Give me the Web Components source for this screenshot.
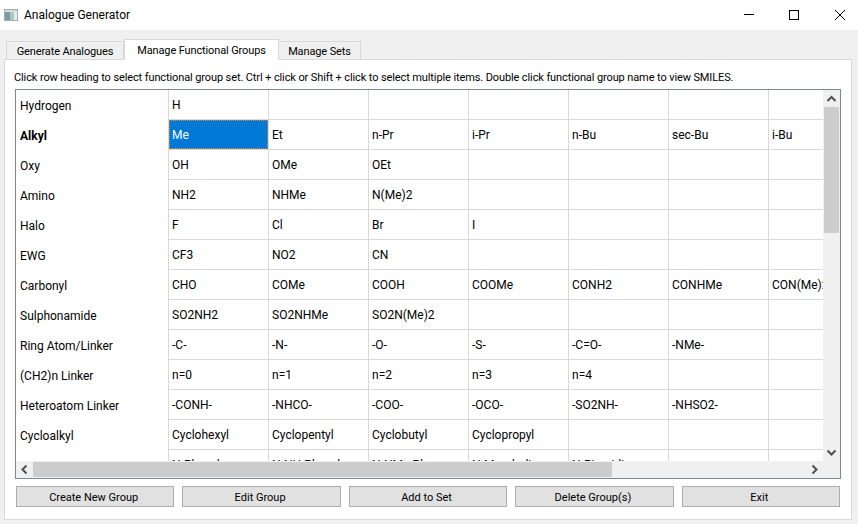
<!DOCTYPE html>
<html lang="en">
<head>
<meta charset="utf-8">
<title>Analogue Generator</title>
<style>
  html, body { margin: 0; height: 100%; background: #f0f0f0; }
  body { font: 12px Roboto, "Noto Sans", sans-serif; color: #000; overflow: hidden; }
</style>
</head>
<body>

<app-window>
  <title-bar slot="title" caption="Analogue Generator"></title-bar>

  <tab-strip slot="tabs">
    <tab-item style="width:118px">Generate Analogues</tab-item>
    <tab-item style="width:155px" selected>Manage Functional Groups</tab-item>
    <tab-item style="width:82px">Manage Sets</tab-item>
  </tab-strip>

  <tab-pane slot="pane">
    <span slot="hint">Click row heading to select functional group set. Ctrl + click or Shift + click to select multiple items. Double click functional group name to view SMILES.</span>

    <group-table slot="table">
      <group-row label="Hydrogen" items="H||||||"></group-row>
      <group-row label="Alkyl" strong selected="0" items="Me|Et|n-Pr|i-Pr|n-Bu|sec-Bu|i-Bu"></group-row>
      <group-row label="Oxy" items="OH|OMe|OEt||||"></group-row>
      <group-row label="Amino" items="NH2|NHMe|N(Me)2||||"></group-row>
      <group-row label="Halo" items="F|Cl|Br|I|||"></group-row>
      <group-row label="EWG" items="CF3|NO2|CN||||"></group-row>
      <group-row label="Carbonyl" items="CHO|COMe|COOH|COOMe|CONH2|CONHMe|CON(Me)2"></group-row>
      <group-row label="Sulphonamide" items="SO2NH2|SO2NHMe|SO2N(Me)2||||"></group-row>
      <group-row label="Ring Atom/Linker" items="-C-|-N-|-O-|-S-|-C=O-|-NMe-|"></group-row>
      <group-row label="(CH2)n Linker" items="n=0|n=1|n=2|n=3|n=4||"></group-row>
      <group-row label="Heteroatom Linker" items="-CONH-|-NHCO-|-COO-|-OCO-|-SO2NH-|-NHSO2-|"></group-row>
      <group-row label="Cycloalkyl" items="Cyclohexyl|Cyclopentyl|Cyclobutyl|Cyclopropyl|||"></group-row>
      <group-row label="" items="N-Phenyl|N-NH-Phenyl|N-NMe-Ph|N-Morpholine|N-Piperidine||"></group-row>
    </group-table>

    <action-button slot="actions">Create New Group</action-button>
    <action-button slot="actions">Edit Group</action-button>
    <action-button slot="actions">Add to Set</action-button>
    <action-button slot="actions">Delete Group(s)</action-button>
    <action-button slot="actions">Exit</action-button>
  </tab-pane>
</app-window>

<script>
// ── Janela: barra de título, separadores e painel ──────────────────────────
class AppWindow extends HTMLElement {
  constructor() {
    super();
    this.attachShadow({ mode: 'open' });
    this.shadowRoot.innerHTML = `
      <style>
        :host { display: flex; flex-direction: column; height: 524px; background: #f0f0f0; }
        .body { display: flex; flex-direction: column; padding: 9px 6px 0 4px; }
      </style>
      <slot name="title"></slot>
      <div class="body">
        <slot name="tabs"></slot>
        <slot name="pane"></slot>
      </div>
    `;
  }
}

class TitleBar extends HTMLElement {
  constructor() {
    super();
    this.attachShadow({ mode: 'open' });
  }

  connectedCallback() {
    this.shadowRoot.innerHTML = `
      <style>
        :host { display: flex; align-items: center; height: 30px; background: #fff; padding: 0 13px 0 4px; }
        .logo { flex: none; margin-right: 6px; margin-top: -1px; }
        .caption { flex: 1; padding-bottom: 1px; }
        svg.ctl { flex: none; display: block; }
        .min { margin-right: 35px; }
        .max { margin-right: 36px; }
      </style>
      <svg class="logo" width="14" height="14" viewBox="0 0 14 14">
        <rect x="0.5" y="1.5" width="13" height="11" fill="#eef2f3" stroke="#a3abb0"/>
        <rect x="1" y="2" width="12" height="1.5" fill="#ced5d8"/>
        <rect x="1" y="4" width="5.5" height="8" fill="#7f98a8"/>
        <rect x="7" y="4" width="3" height="8" fill="#a5cfb2"/>
        <rect x="10" y="4" width="3" height="8" fill="#e6eeec"/>
      </svg>
      <span class="caption">${this.getAttribute('caption')}</span>
      <svg class="ctl min" width="10" height="10" viewBox="0 0 10 10"><path d="M0 4.5H10" stroke="#000" fill="none"/></svg>
      <svg class="ctl max" width="10" height="10" viewBox="0 0 10 10"><rect x="0.5" y="0.5" width="9" height="9" stroke="#000" fill="none"/></svg>
      <svg class="ctl" width="10" height="10" viewBox="0 0 10 10"><path d="M0 0L10 10M10 0L0 10" stroke="#000" stroke-width="1" fill="none"/></svg>
    `;
  }
}

class TabStrip extends HTMLElement {
  constructor() {
    super();
    this.attachShadow({ mode: 'open' });
    this.shadowRoot.innerHTML = `
      <style>
        :host { display: flex; align-items: flex-end; height: 21px; padding-left: 2px; margin-bottom: -1px; position: relative; z-index: 1; font-size: 11px; letter-spacing: -0.12px; }
      </style>
      <slot></slot>
    `;
  }
}

class TabItem extends HTMLElement {
  constructor() {
    super();
    this.attachShadow({ mode: 'open' });
    this.shadowRoot.innerHTML = `
      <style>
        :host {
          display: flex; align-items: center; justify-content: center; box-sizing: border-box; height: 19px;
          padding-top: 1px; background: #f0f0f0; white-space: nowrap;
          border: 1px solid #d9d9d9; border-left-width: 0; border-bottom-color: #d9d9d9;
        }
        :host(:first-child) { border-left-width: 1px; }
        :host([selected]) {
          height: 21px; background: #fff;
          border-left-width: 1px; border-bottom-color: #fff;
        }
        :host(:has(+ [selected])) { border-right-width: 0; }
      </style>
      <slot></slot>
    `;
  }
}

class TabPane extends HTMLElement {
  constructor() {
    super();
    this.attachShadow({ mode: 'open' });
    this.shadowRoot.innerHTML = `
      <style>
        :host {
          display: flex; flex-direction: column; box-sizing: border-box; height: 461px;
          background: #fff; border: 1px solid #d9d9d9; padding: 0 10px;
        }
        .hint { height: 29px; line-height: 35px; white-space: nowrap; margin-left: -1px; font-size: 11px; letter-spacing: -0.11px; }
        .actions { display: flex; gap: 8px; margin: 7px 0 0; padding: 0 1px 0 1px; font-size: 11px; }
      </style>
      <div class="hint"><slot name="hint"></slot></div>
      <slot name="table"></slot>
      <div class="actions"><slot name="actions"></slot></div>
    `;
  }
}

// ── Tabela com barras de deslocamento ──────────────────────────────────────
class GroupTable extends HTMLElement {
  constructor() {
    super();
    this.attachShadow({ mode: 'open' });
    this.shadowRoot.innerHTML = `
      <style>
        :host {
          display: grid; grid-template-columns: 807px 17px; grid-template-rows: 371px 17px;
          box-sizing: border-box; height: 390px; border: 1px solid #828790; background: #f0f0f0;
        }
        .view { overflow: hidden; background: #fff; }
        .sb { display: flex; background: #f0f0f0; align-items: center; }
        .sb svg { flex: none; display: block; }
        .v { flex-direction: column; }
        .v .thumb { width: 15px; height: 126px; background: #cdcdcd; margin-top: 0; }
        .v .fill { flex: 1; }
        .v svg { width: 17px; height: 17px; }
        .h .thumb { height: 15px; width: 579px; background: #cdcdcd; }
        .h .fill { flex: 1; }
        .h svg { width: 17px; height: 17px; }
      </style>
      <div class="view"><slot></slot></div>
      <div class="sb v">
        <svg viewBox="0 0 17 17"><path d="M4.5 11L8.5 7L12.5 11" fill="none" stroke="#505050" stroke-width="2"/></svg>
        <div class="thumb"></div>
        <div class="fill"></div>
        <svg viewBox="0 0 17 17"><path d="M4.5 6.5L8.5 10.5L12.5 6.5" fill="none" stroke="#505050" stroke-width="2"/></svg>
      </div>
      <div class="sb h">
        <svg viewBox="0 0 17 17"><path d="M10.5 4.5L6.5 8.5L10.5 12.5" fill="none" stroke="#505050" stroke-width="2"/></svg>
        <div class="thumb"></div>
        <div class="fill"></div>
        <svg viewBox="0 0 17 17"><path d="M6.5 4.5L10.5 8.5L6.5 12.5" fill="none" stroke="#505050" stroke-width="2"/></svg>
      </div>
      <div class="sb"></div>
    `;
  }
}

class GroupRow extends HTMLElement {
  constructor() {
    super();
    this.attachShadow({ mode: 'open' });
  }

  // Os itens vêm separados por "|"; célula vazia = linha da grelha sem texto
  connectedCallback() {
    const items = this.getAttribute('items').split('|');
    const selected = this.getAttribute('selected');
    const cells = items.map((text, i) =>
      `<div class="cell${String(i) === selected ? ' sel' : ''}">${text}</div>`).join('');

    this.shadowRoot.innerHTML = `
      <style>
        :host { display: grid; grid-template-columns: 153px repeat(7, 100px); height: 30px; white-space: nowrap; }
        .head {
          box-sizing: border-box; padding: 2px 0 0 4px; display: flex; align-items: center;
          border-right: 1px solid #d8d8d8;
        }
        :host([strong]) .head { font-weight: 700; }
        .cell {
          box-sizing: border-box; padding: 0 0 0 3px; display: flex; align-items: center;
          border-right: 1px solid #d8d8d8; border-bottom: 1px solid #d8d8d8;
          overflow: hidden;
        }
        .sel { background: #0078d7; color: #fff; position: relative; }
        .sel::after { content: ""; position: absolute; inset: 0; border: 1px dotted #f08a24; }
      </style>
      <div class="head">${this.getAttribute('label')}</div>
      ${cells}
    `;
  }
}

class ActionButton extends HTMLElement {
  constructor() {
    super();
    this.attachShadow({ mode: 'open' });
    this.shadowRoot.innerHTML = `
      <style>
        :host {
          flex: 1 1 0; display: flex; align-items: center; justify-content: center;
          box-sizing: border-box; height: 21px; padding: 1px 3px 0 0; background: #e1e1e1; border: 1px solid #adadad;
          white-space: nowrap;
        }
      </style>
      <slot></slot>
    `;
  }
}

customElements.define('app-window', AppWindow);
customElements.define('title-bar', TitleBar);
customElements.define('tab-strip', TabStrip);
customElements.define('tab-item', TabItem);
customElements.define('tab-pane', TabPane);
customElements.define('group-table', GroupTable);
customElements.define('group-row', GroupRow);
customElements.define('action-button', ActionButton);
</script>
</body>
</html>
